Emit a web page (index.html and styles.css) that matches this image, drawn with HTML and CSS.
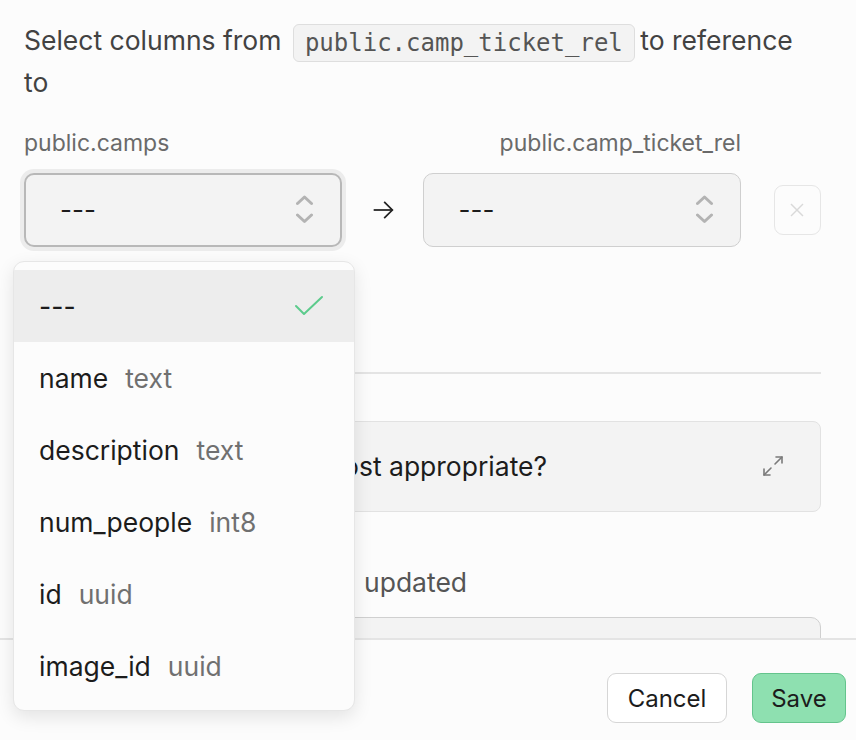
FILE: index.html
```html
<!DOCTYPE html>
<html>
<head>
<meta charset="utf-8">
<link rel="stylesheet" href="styles.css">
</head>
<body>
<div class="page">
  <div class="content">
    <p class="title"><span>Select columns from</span> <code class="code">public.camp_ticket_rel</code> <span>to</span> <span>reference</span> <span>to</span></p>

    <div class="row labels">
      <div class="col"><span class="label">public.camps</span></div>
      <div class="arrow-col"></div>
      <div class="col right"><span class="label">public.camp_ticket_rel</span></div>
      <div class="x-col"></div>
    </div>

    <div class="row selects">
      <div class="col">
        <div class="select focused">
          <span>---</span>
          <svg class="chev" width="18" height="30" viewBox="0 0 18 30"><polyline points="1.5,8.5 8.5,2 15.5,8.5"/><polyline points="1.5,20 8.5,26.5 15.5,20"/></svg>
        </div>
      </div>
      <div class="arrow-col">
        <svg width="28" height="28" viewBox="0 0 24 24" class="arrow"><line x1="4" y1="12" x2="20" y2="12"/><polyline points="13,5 20,12 13,19"/></svg>
      </div>
      <div class="col">
        <div class="select">
          <span>---</span>
          <svg class="chev" width="18" height="30" viewBox="0 0 18 30"><polyline points="1.5,8.5 8.5,2 15.5,8.5"/><polyline points="1.5,20 8.5,26.5 15.5,20"/></svg>
        </div>
      </div>
      <div class="x-col">
        <button class="xbtn"><svg width="20" height="20" viewBox="0 0 20 20"><line x1="4" y1="4" x2="16" y2="16"/><line x1="16" y1="4" x2="4" y2="16"/></svg></button>
      </div>
    </div>

    <div class="separator"></div>

    <div class="accordion">
      <span class="acc-text">ost appropriate?</span>
      <svg class="expand" width="24" height="24" viewBox="0 0 24 24"><polyline points="15,3 21,3 21,9"/><polyline points="9,21 3,21 3,15"/><line x1="21" y1="3" x2="14" y2="10"/><line x1="3" y1="21" x2="10" y2="14"/></svg>
    </div>

    <div class="field-label">updated</div>
    <div class="field-box"></div>
  </div>

  <div class="footer">
    <button class="btn cancel">Cancel</button>
    <button class="btn save">Save</button>
  </div>

  <div class="dropdown">
    <div class="item active"><span class="name">---</span>
      <svg class="check" width="30" height="22" viewBox="0 0 30 22"><polyline points="2,11 10,19 28,2"/></svg>
    </div>
    <div class="item"><span class="name">name</span><span class="type">text</span></div>
    <div class="item"><span class="name">description</span><span class="type">text</span></div>
    <div class="item"><span class="name">num_people</span><span class="type">int8</span></div>
    <div class="item"><span class="name">id</span><span class="type">uuid</span></div>
    <div class="item"><span class="name">image_id</span><span class="type">uuid</span></div>
  </div>
</div>
</body>
</html>
```
FILE: styles.css
```css
* { box-sizing: border-box; }
html, body { margin: 0; padding: 0; }
body {
  background: #fcfcfc;
  font-family: "Inter", "Noto Sans", sans-serif;
  color: #1c1c1c;
}
.page {
  position: relative;
  width: 856px;
  height: 740px;
  display: flex;
  flex-direction: column;
  overflow: hidden;
}
.content {
  flex: 1;
  overflow: hidden;
  padding: 20px 35px 0 24px;
  display: flex;
  flex-direction: column;
}
.title {
  margin: 0;
  width: 800px;
  font-size: 26.5px;
  line-height: 40px;
  color: #424242;
  flex-shrink: 0;
}
.code {
  display: inline-block;
  font-family: "DejaVu Sans Mono", monospace;
  font-size: 24px;
  line-height: 34px;
  height: 38px;
  padding: 1px 11px;
  border: 1.5px solid #dedede;
  background: #f3f3f3;
  border-radius: 6px;
  color: #555;
  vertical-align: middle;
  margin: 0 -2px 0 4px;
}
.row { display: flex; flex-shrink: 0; }
.col { width: 318px; display: flex; }
.col.right { justify-content: flex-end; }
.arrow-col { width: 82px; display: flex; align-items: center; justify-content: center; }
.x-col { width: 80px; display: flex; justify-content: flex-end; align-items: center; }
.labels { margin-top: 28px; height: 26px; align-items: center; }
.label { font-size: 23px; color: #6a6a6a; }
.selects { margin-top: 17px; height: 74px; }
.select {
  width: 100%;
  height: 74px;
  border: 1.5px solid #cfcfcf;
  background: #f3f3f3;
  border-radius: 10px;
  display: flex;
  align-items: center;
  justify-content: space-between;
  padding: 0 26px 0 34px;
  font-size: 26px;
  color: #1c1c1c;
}
.select.focused {
  border: 2px solid #b8b8b8;
  box-shadow: 0 0 0 4px #ececec;
}
.chev polyline { fill: none; stroke: #b3b3b3; stroke-width: 3; stroke-linecap: round; stroke-linejoin: round; }
.arrow line, .arrow polyline { fill: none; stroke: #222; stroke-width: 1.5; }
.xbtn {
  width: 47px;
  height: 50px;
  border: 1.5px solid #e6e6e6;
  background: #fcfcfc;
  border-radius: 9px;
  padding: 0;
  display: flex;
  align-items: center;
  justify-content: center;
}
.xbtn line { stroke: #d9d9d9; stroke-width: 1.5; }
.separator {
  margin-top: 125px;
  height: 2px;
  flex-shrink: 0;
  background: #e4e4e4;
}
.accordion {
  margin-top: 47px;
  height: 91px;
  flex-shrink: 0;
  background: #f3f3f3;
  border: 1.5px solid #e2e2e2;
  border-radius: 8px;
  display: flex;
  align-items: center;
  justify-content: space-between;
  padding: 0 35px 0 24px;
  font-size: 26.5px;
  color: #1c1c1c;
}
.acc-text { padding-left: 294px; }
.expand polyline, .expand line { fill: none; stroke: #7a7a7a; stroke-width: 1.6; stroke-linecap: round; stroke-linejoin: round; }
.field-label {
  margin-top: 54px;
  line-height: 32px;
  font-size: 26.5px;
  color: #555;
  padding-left: 340px;
  flex-shrink: 0;
}
.field-box {
  margin-top: 19px;
  height: 60px;
  flex-shrink: 0;
  background: #f3f3f3;
  border: 1.5px solid #d0d0d0;
  border-radius: 10px;
}
.footer {
  height: 102px;
  flex-shrink: 0;
  border-top: 2px solid #e4e4e4;
  background: #fcfcfc;
  display: flex;
  justify-content: flex-end;
  align-items: flex-start;
  gap: 25px;
  padding: 33px 10px 0 0;
}
.btn {
  height: 50px;
  border-radius: 9px;
  font-family: "Inter", "Noto Sans", sans-serif;
  font-size: 24px;
  color: #1c1c1c;
  padding: 0;
}
.cancel { width: 120px; background: #fff; border: 1.5px solid #d6d6d6; }
.save { width: 94px; background: #8ee0b0; border: 1.5px solid #64c48c; }
.dropdown {
  position: absolute;
  left: 13px;
  top: 261px;
  width: 342px;
  height: 450px;
  background: #fcfcfc;
  border: 1.5px solid #e6e6e6;
  border-radius: 11px;
  box-shadow: 0 6px 18px rgba(0,0,0,0.10);
  padding: 8px 0;
}
.item {
  height: 72px;
  display: flex;
  align-items: center;
  padding: 0 30px 0 25px;
  font-size: 26.5px;
}
.item.active { background: #ededed; justify-content: space-between; }
.item .name { color: #1c1c1c; }
.item .type { color: #707070; margin-left: 17px; }
.check polyline { fill: none; stroke: #5ccb8c; stroke-width: 2; stroke-linecap: round; stroke-linejoin: round; }
```
